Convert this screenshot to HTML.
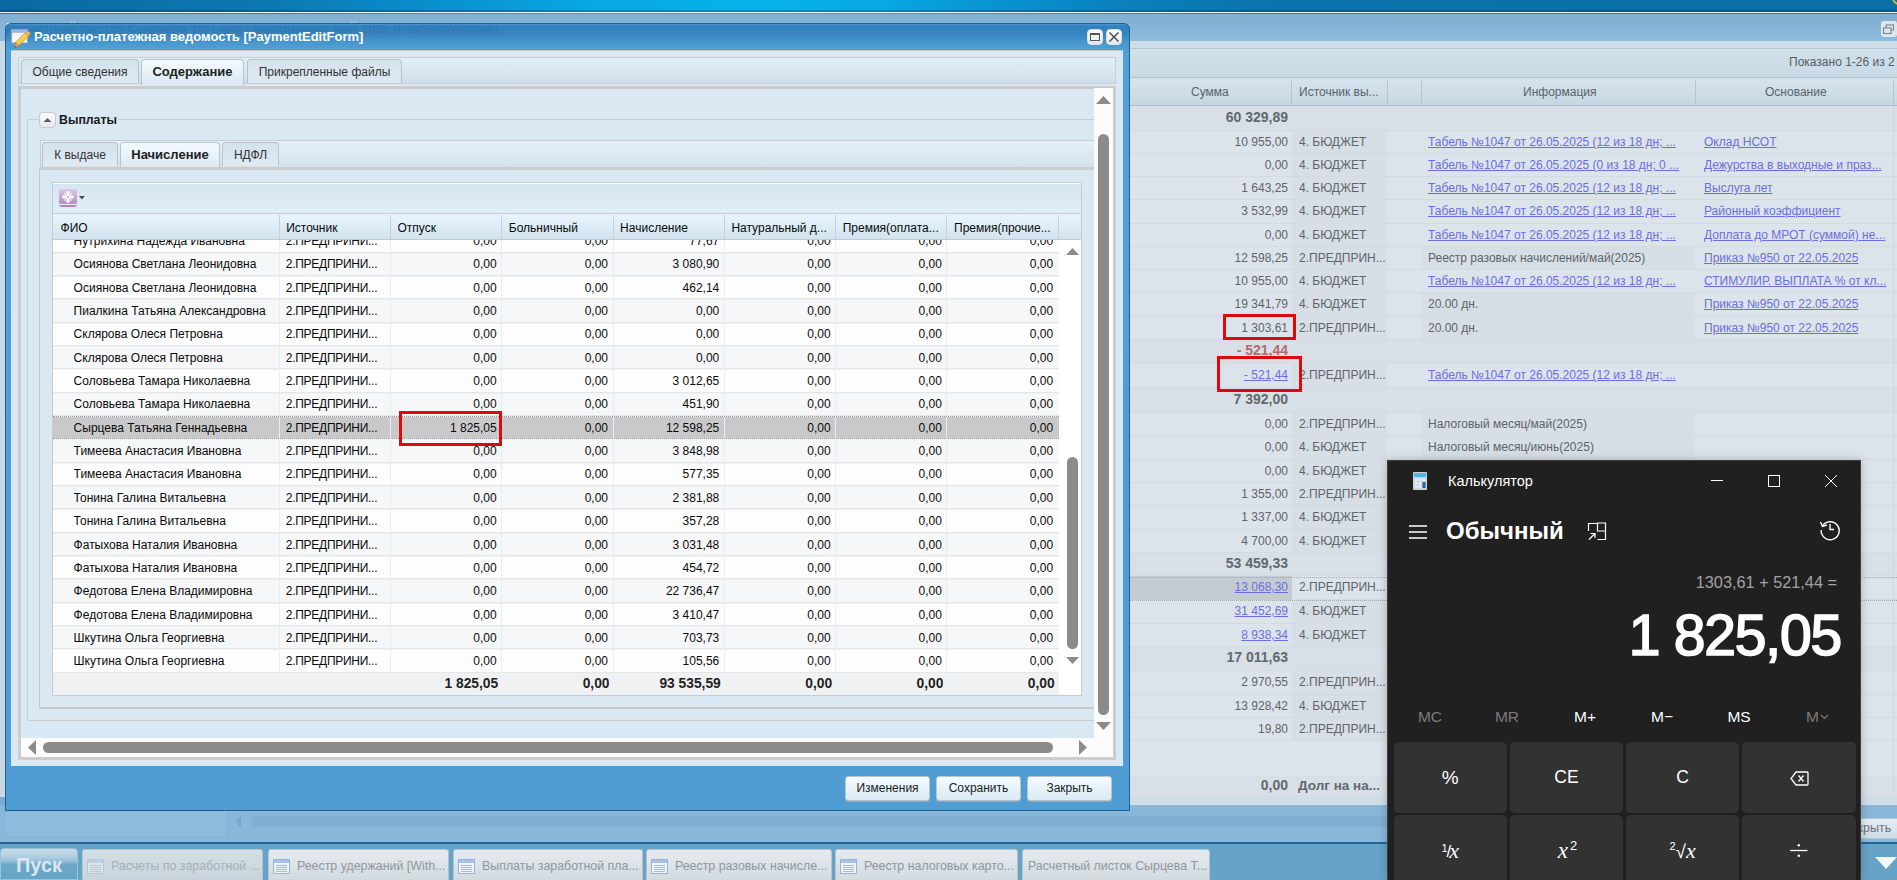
<!DOCTYPE html><html><head><meta charset="utf-8"><style>
*{margin:0;padding:0;box-sizing:border-box}
html,body{width:1897px;height:880px;overflow:hidden;background:#c7d6e2;font-family:"Liberation Sans",sans-serif;font-size:12px;position:relative}
.abs{position:absolute}
.nw{white-space:nowrap;overflow:hidden}
/* top bar */
#topbar{left:0;top:0;width:1897px;height:12px;background:linear-gradient(90deg,#0b68a0 0%,#0c78b0 14%,#0a8ccb 22%,#07a8e2 31%,#06b2ea 40%,#07aae4 46%,#0898d4 51%,#0a80bc 59%,#0a72aa 68%,#0a6fa6 100%)}
#topline{left:0;top:12px;width:1897px;height:1px;background:#e9f6fb}
#topline2{left:0;top:13px;width:1897px;height:1px;background:linear-gradient(90deg,#0b68a0 0%,#0c78b0 14%,#0a8ccb 22%,#07a8e2 31%,#06b2ea 40%,#07aae4 46%,#0898d4 51%,#0a80bc 59%,#0a72aa 68%,#0a6fa6 100%);opacity:.85}
#topdark{left:0;top:10px;width:1897px;height:2px;background:rgba(0,30,80,.28)}
/* background window */
#bgwin{left:0;top:14px;width:1897px;height:828px;background:#c9d8e3}
#bghead{left:0;top:14px;width:1897px;height:27px;background:linear-gradient(#80aed0,#8cbbdc)}
#bgtitle{left:6px;top:20px;font-weight:bold;font-size:13px;color:#fff;white-space:nowrap}
#bgstrip{left:1130px;top:41px;width:767px;height:8px;background:#cfdee8;border-bottom:1px solid #b9c6cf}
#bgtool{left:1130px;top:49px;width:767px;height:29px;background:linear-gradient(#d1e1eb,#c9dae6);border-bottom:1px solid #b5c4ce}
#bghdr{left:1130px;top:78px;width:767px;height:28px;background:linear-gradient(#d6e4ee,#c6d7e3);border-bottom:1px solid #adbdc8}
.bgh{position:absolute;top:78px;height:28px;line-height:28px;color:#5c636a;font-size:12px;white-space:nowrap}
.bgsep{position:absolute;top:80px;width:1px;height:25px;background:#b6c4ce}
.bgrow{position:absolute;left:1130px;width:767px;background:#dde3ea;border-bottom:1px solid #d3dae1}
.bgc{position:absolute;color:#5d646b;white-space:nowrap;overflow:hidden;font-size:12px}
.bgb{font-weight:bold;color:#62686e}
.lnk{color:#6a6fe0;text-decoration:underline}
/* dialog */
#dlg{left:5px;top:23px;width:1125px;height:788px;background:linear-gradient(#4a98d0 0px,#3380bc 2px,#3784c0 10px,#4a9ad0 20px,#519fd4 26px,#4f9dd2 100%);border:1px solid #1d5f96;border-radius:6px 6px 0 0}
#dlgtitle{left:34px;top:29px;font-weight:bold;font-size:13px;color:#fff;white-space:nowrap}
#ghost{left:6px;top:25px;height:9px;overflow:hidden;font-weight:bold;font-size:13px;color:#2b6aa3;white-space:nowrap;opacity:.3}
#body{left:11px;top:50px;width:1112px;height:716px;background:#dae8f3;border-top:1px solid #c8c8c8}
.tbtn{position:absolute;width:16px;height:16px;background:linear-gradient(#fafcfd,#e3e9ee);border:1px solid #d9e2e8;border-radius:4px}
/* tabs */
.tab{position:absolute;height:25px;border:1px solid #b9c3ca;border-bottom:none;border-radius:4px 4px 0 0;background:linear-gradient(#d4e2ec,#dfeaf3);color:#333;font-size:12px;text-align:center;line-height:24px;white-space:nowrap}
.tab.act{background:linear-gradient(#f2fafe,#dce9f4);font-weight:bold;color:#222;height:27px;font-size:13px}
/* grid */
.gc{position:absolute;white-space:nowrap;overflow:hidden;color:#0a0a0a;font-size:12px}
.gr{text-align:right}
.calc{font-family:"Liberation Sans",sans-serif}
</style></head><body><div id="topbar" class="abs"></div><div id="topdark" class="abs"></div><div id="topline" class="abs"></div><div id="topline2" class="abs"></div><div id="bgwin" class="abs"></div><div id="bghead" class="abs"></div><div id="bgtitle" class="abs">Расчетный листок Сырцева Татьяна Геннадьевна май 2025 [PaySlipWindow]</div><div id="bgstrip" class="abs"></div><div id="bgtool" class="abs"></div><div class="abs" style="left:1881px;top:21px;width:16px;height:16px;background:#dfe7ed;border-radius:3px"></div><svg class="abs" style="left:1881px;top:21px" width="16" height="16"><rect x="5" y="4" width="7.5" height="5" fill="none" stroke="#7d8a94" stroke-width="1.2"/><rect x="2.5" y="7" width="7.5" height="5.5" fill="#dfe7ed" stroke="#7d8a94" stroke-width="1.2"/></svg><svg class="abs" style="left:1880px;top:0" width="17" height="12"><circle cx="22" cy="-5" r="10" fill="none" stroke="#e3bd23" stroke-width="1.8"/></svg><div class="abs nw" style="left:1789px;top:55px;color:#555d64;font-size:12px">Показано 1-26 из 2</div><div id="bghdr" class="abs"></div><div class="bgsep" style="left:1291px"></div><div class="bgsep" style="left:1387px"></div><div class="bgsep" style="left:1421px"></div><div class="bgsep" style="left:1695px"></div><div class="bgsep" style="left:1893px"></div><div class="bgh" style="left:1191px">Сумма</div><div class="bgh" style="left:1299px">Источник вы...</div><div class="bgh" style="left:1523px">Информация</div><div class="bgh" style="left:1765px">Основание</div><div class="bgrow" style="top:106px;height:25px;background:#d9dfe6"></div><div class="bgc bgb" style="left:1130px;width:158px;top:106px;height:24px;line-height:22px;text-align:right;font-size:14px">60 329,89</div><div class="bgrow" style="top:131px;height:23px;background:#dde3ea"></div><div class="abs" style="left:1292px;top:131px;width:95px;height:22px;background:#d8dee5"></div><div class="bgc" style="left:1130px;width:158px;top:131px;height:22px;line-height:22px;text-align:right">10 955,00</div><div class="bgc" style="left:1299px;width:86px;top:131px;height:22px;line-height:22px">4. БЮДЖЕТ</div><div class="bgc" style="left:1428px;width:262px;top:131px;height:22px;line-height:22px"><span class="lnk">Табель №1047 от 26.05.2025 (12 из 18 дн; ...</span></div><div class="bgc" style="left:1704px;width:186px;top:131px;height:22px;line-height:22px"><span class="lnk">Оклад НСОТ</span></div><div class="bgrow" style="top:154px;height:23px;background:#dde3ea"></div><div class="abs" style="left:1292px;top:154px;width:95px;height:22px;background:#d8dee5"></div><div class="bgc" style="left:1130px;width:158px;top:154px;height:22px;line-height:22px;text-align:right">0,00</div><div class="bgc" style="left:1299px;width:86px;top:154px;height:22px;line-height:22px">4. БЮДЖЕТ</div><div class="bgc" style="left:1428px;width:262px;top:154px;height:22px;line-height:22px"><span class="lnk">Табель №1047 от 26.05.2025 (0 из 18 дн; 0 ...</span></div><div class="bgc" style="left:1704px;width:186px;top:154px;height:22px;line-height:22px"><span class="lnk">Дежурства в выходные и праз...</span></div><div class="bgrow" style="top:177px;height:23px;background:#dde3ea"></div><div class="abs" style="left:1292px;top:177px;width:95px;height:22px;background:#d8dee5"></div><div class="bgc" style="left:1130px;width:158px;top:177px;height:22px;line-height:22px;text-align:right">1 643,25</div><div class="bgc" style="left:1299px;width:86px;top:177px;height:22px;line-height:22px">4. БЮДЖЕТ</div><div class="bgc" style="left:1428px;width:262px;top:177px;height:22px;line-height:22px"><span class="lnk">Табель №1047 от 26.05.2025 (12 из 18 дн; ...</span></div><div class="bgc" style="left:1704px;width:186px;top:177px;height:22px;line-height:22px"><span class="lnk">Выслуга лет</span></div><div class="bgrow" style="top:200px;height:24px;background:#dde3ea"></div><div class="abs" style="left:1292px;top:200px;width:95px;height:23px;background:#d8dee5"></div><div class="bgc" style="left:1130px;width:158px;top:200px;height:23px;line-height:23px;text-align:right">3 532,99</div><div class="bgc" style="left:1299px;width:86px;top:200px;height:23px;line-height:23px">4. БЮДЖЕТ</div><div class="bgc" style="left:1428px;width:262px;top:200px;height:23px;line-height:23px"><span class="lnk">Табель №1047 от 26.05.2025 (12 из 18 дн; ...</span></div><div class="bgc" style="left:1704px;width:186px;top:200px;height:23px;line-height:23px"><span class="lnk">Районный коэффициент</span></div><div class="bgrow" style="top:224px;height:23px;background:#dde3ea"></div><div class="abs" style="left:1292px;top:224px;width:95px;height:22px;background:#d8dee5"></div><div class="bgc" style="left:1130px;width:158px;top:224px;height:22px;line-height:22px;text-align:right">0,00</div><div class="bgc" style="left:1299px;width:86px;top:224px;height:22px;line-height:22px">4. БЮДЖЕТ</div><div class="bgc" style="left:1428px;width:262px;top:224px;height:22px;line-height:22px"><span class="lnk">Табель №1047 от 26.05.2025 (12 из 18 дн; ...</span></div><div class="bgc" style="left:1704px;width:186px;top:224px;height:22px;line-height:22px"><span class="lnk">Доплата до МРОТ (суммой) не...</span></div><div class="bgrow" style="top:247px;height:23px;background:#dde3ea"></div><div class="abs" style="left:1292px;top:247px;width:95px;height:22px;background:#d8dee5"></div><div class="abs" style="left:1421px;top:247px;width:274px;height:22px;background:#d8dee5"></div><div class="bgc" style="left:1130px;width:158px;top:247px;height:22px;line-height:22px;text-align:right">12 598,25</div><div class="bgc" style="left:1299px;width:86px;top:247px;height:22px;line-height:22px">2.ПРЕДПРИН...</div><div class="bgc" style="left:1428px;width:262px;top:247px;height:22px;line-height:22px">Реестр разовых начислений/май(2025)</div><div class="bgc" style="left:1704px;width:186px;top:247px;height:22px;line-height:22px"><span class="lnk">Приказ №950 от 22.05.2025</span></div><div class="bgrow" style="top:270px;height:23px;background:#dde3ea"></div><div class="abs" style="left:1292px;top:270px;width:95px;height:22px;background:#d8dee5"></div><div class="bgc" style="left:1130px;width:158px;top:270px;height:22px;line-height:22px;text-align:right">10 955,00</div><div class="bgc" style="left:1299px;width:86px;top:270px;height:22px;line-height:22px">4. БЮДЖЕТ</div><div class="bgc" style="left:1428px;width:262px;top:270px;height:22px;line-height:22px"><span class="lnk">Табель №1047 от 26.05.2025 (12 из 18 дн; ...</span></div><div class="bgc" style="left:1704px;width:186px;top:270px;height:22px;line-height:22px"><span class="lnk">СТИМУЛИР. ВЫПЛАТА % от кл...</span></div><div class="bgrow" style="top:293px;height:24px;background:#dde3ea"></div><div class="abs" style="left:1292px;top:293px;width:95px;height:23px;background:#d8dee5"></div><div class="abs" style="left:1421px;top:293px;width:274px;height:23px;background:#d8dee5"></div><div class="bgc" style="left:1130px;width:158px;top:293px;height:23px;line-height:23px;text-align:right">19 341,79</div><div class="bgc" style="left:1299px;width:86px;top:293px;height:23px;line-height:23px">4. БЮДЖЕТ</div><div class="bgc" style="left:1428px;width:262px;top:293px;height:23px;line-height:23px">20.00 дн.</div><div class="bgc" style="left:1704px;width:186px;top:293px;height:23px;line-height:23px"><span class="lnk">Приказ №950 от 22.05.2025</span></div><div class="bgrow" style="top:317px;height:23px;background:#dde3ea"></div><div class="abs" style="left:1292px;top:317px;width:95px;height:22px;background:#d8dee5"></div><div class="abs" style="left:1421px;top:317px;width:274px;height:22px;background:#d8dee5"></div><div class="bgc" style="left:1130px;width:158px;top:317px;height:22px;line-height:22px;text-align:right">1 303,61</div><div class="bgc" style="left:1299px;width:86px;top:317px;height:22px;line-height:22px">2.ПРЕДПРИН...</div><div class="bgc" style="left:1428px;width:262px;top:317px;height:22px;line-height:22px">20.00 дн.</div><div class="bgc" style="left:1704px;width:186px;top:317px;height:22px;line-height:22px"><span class="lnk">Приказ №950 от 22.05.2025</span></div><div class="bgrow" style="top:340px;height:24px;background:#d9dfe6"></div><div class="bgc bgb" style="left:1130px;width:158px;top:340px;height:23px;line-height:21px;text-align:right;color:#b46a70;font-size:14px">- 521,44</div><div class="bgrow" style="top:364px;height:24px;background:#dde3ea"></div><div class="abs" style="left:1292px;top:364px;width:95px;height:23px;background:#d8dee5"></div><div class="bgc" style="left:1130px;width:158px;top:364px;height:23px;line-height:23px;text-align:right"><span class="lnk">- 521,44</span></div><div class="bgc" style="left:1299px;width:86px;top:364px;height:23px;line-height:23px">2.ПРЕДПРИН...</div><div class="bgc" style="left:1428px;width:262px;top:364px;height:23px;line-height:23px"><span class="lnk">Табель №1047 от 26.05.2025 (12 из 18 дн; ...</span></div><div class="bgrow" style="top:388px;height:25px;background:#d9dfe6"></div><div class="bgc bgb" style="left:1130px;width:158px;top:388px;height:24px;line-height:22px;text-align:right;font-size:14px">7 392,00</div><div class="bgrow" style="top:413px;height:23px;background:#dde3ea"></div><div class="abs" style="left:1292px;top:413px;width:95px;height:22px;background:#d8dee5"></div><div class="abs" style="left:1421px;top:413px;width:274px;height:22px;background:#d8dee5"></div><div class="bgc" style="left:1130px;width:158px;top:413px;height:22px;line-height:22px;text-align:right">0,00</div><div class="bgc" style="left:1299px;width:86px;top:413px;height:22px;line-height:22px">2.ПРЕДПРИН...</div><div class="bgc" style="left:1428px;width:262px;top:413px;height:22px;line-height:22px">Налоговый месяц/май(2025)</div><div class="bgrow" style="top:436px;height:24px;background:#dde3ea"></div><div class="abs" style="left:1292px;top:436px;width:95px;height:23px;background:#d8dee5"></div><div class="abs" style="left:1421px;top:436px;width:274px;height:23px;background:#d8dee5"></div><div class="bgc" style="left:1130px;width:158px;top:436px;height:23px;line-height:23px;text-align:right">0,00</div><div class="bgc" style="left:1299px;width:86px;top:436px;height:23px;line-height:23px">4. БЮДЖЕТ</div><div class="bgc" style="left:1428px;width:262px;top:436px;height:23px;line-height:23px">Налоговый месяц/июнь(2025)</div><div class="bgrow" style="top:460px;height:23px;background:#dde3ea"></div><div class="abs" style="left:1292px;top:460px;width:95px;height:22px;background:#d8dee5"></div><div class="bgc" style="left:1130px;width:158px;top:460px;height:22px;line-height:22px;text-align:right">0,00</div><div class="bgc" style="left:1299px;width:86px;top:460px;height:22px;line-height:22px">4. БЮДЖЕТ</div><div class="bgrow" style="top:483px;height:23px;background:#dde3ea"></div><div class="abs" style="left:1292px;top:483px;width:95px;height:22px;background:#d8dee5"></div><div class="bgc" style="left:1130px;width:158px;top:483px;height:22px;line-height:22px;text-align:right">1 355,00</div><div class="bgc" style="left:1299px;width:86px;top:483px;height:22px;line-height:22px">2.ПРЕДПРИН...</div><div class="bgrow" style="top:506px;height:24px;background:#dde3ea"></div><div class="abs" style="left:1292px;top:506px;width:95px;height:23px;background:#d8dee5"></div><div class="bgc" style="left:1130px;width:158px;top:506px;height:23px;line-height:23px;text-align:right">1 337,00</div><div class="bgc" style="left:1299px;width:86px;top:506px;height:23px;line-height:23px">4. БЮДЖЕТ</div><div class="bgrow" style="top:530px;height:23px;background:#dde3ea"></div><div class="abs" style="left:1292px;top:530px;width:95px;height:22px;background:#d8dee5"></div><div class="bgc" style="left:1130px;width:158px;top:530px;height:22px;line-height:22px;text-align:right">4 700,00</div><div class="bgc" style="left:1299px;width:86px;top:530px;height:22px;line-height:22px">4. БЮДЖЕТ</div><div class="bgrow" style="top:553px;height:23px;background:#d9dfe6"></div><div class="bgc bgb" style="left:1130px;width:158px;top:553px;height:22px;line-height:20px;text-align:right;font-size:14px">53 459,33</div><div class="bgrow" style="top:576px;height:24px;background:#dde3ea"></div><div class="abs" style="left:1130px;top:576px;width:162px;height:24px;background:#c5cbd2"></div><div class="bgc" style="left:1130px;width:158px;top:576px;height:23px;line-height:23px;text-align:right"><span class="lnk">13 068,30</span></div><div class="bgc" style="left:1299px;width:86px;top:576px;height:23px;line-height:23px">2.ПРЕДПРИН...</div><div class="bgrow" style="top:600px;height:24px;background:#dde3ea"></div><div class="abs" style="left:1292px;top:600px;width:95px;height:23px;background:#d8dee5"></div><div class="bgc" style="left:1130px;width:158px;top:600px;height:23px;line-height:23px;text-align:right"><span class="lnk">31 452,69</span></div><div class="bgc" style="left:1299px;width:86px;top:600px;height:23px;line-height:23px">4. БЮДЖЕТ</div><div class="bgrow" style="top:624px;height:23px;background:#dde3ea"></div><div class="abs" style="left:1292px;top:624px;width:95px;height:22px;background:#d8dee5"></div><div class="bgc" style="left:1130px;width:158px;top:624px;height:22px;line-height:22px;text-align:right"><span class="lnk">8 938,34</span></div><div class="bgc" style="left:1299px;width:86px;top:624px;height:22px;line-height:22px">4. БЮДЖЕТ</div><div class="bgrow" style="top:647px;height:24px;background:#d9dfe6"></div><div class="bgc bgb" style="left:1130px;width:158px;top:647px;height:23px;line-height:21px;text-align:right;font-size:14px">17 011,63</div><div class="bgrow" style="top:671px;height:24px;background:#dde3ea"></div><div class="abs" style="left:1292px;top:671px;width:95px;height:23px;background:#d8dee5"></div><div class="bgc" style="left:1130px;width:158px;top:671px;height:23px;line-height:23px;text-align:right">2 970,55</div><div class="bgc" style="left:1299px;width:86px;top:671px;height:23px;line-height:23px">2.ПРЕДПРИН...</div><div class="bgrow" style="top:695px;height:23px;background:#dde3ea"></div><div class="abs" style="left:1292px;top:695px;width:95px;height:22px;background:#d8dee5"></div><div class="bgc" style="left:1130px;width:158px;top:695px;height:22px;line-height:22px;text-align:right">13 928,42</div><div class="bgc" style="left:1299px;width:86px;top:695px;height:22px;line-height:22px">4. БЮДЖЕТ</div><div class="bgrow" style="top:718px;height:23px;background:#dde3ea"></div><div class="abs" style="left:1292px;top:718px;width:95px;height:22px;background:#d8dee5"></div><div class="bgc" style="left:1130px;width:158px;top:718px;height:22px;line-height:22px;text-align:right">19,80</div><div class="bgc" style="left:1299px;width:86px;top:718px;height:22px;line-height:22px">2.ПРЕДПРИН...</div><div class="abs" style="left:1130px;top:577px;width:767px;height:24px;border-top:1px dotted #a2aab2;border-bottom:1px dotted #a2aab2"></div><div class="bgrow" style="top:741px;height:34px;background:#dee4eb;border:none"></div><div class="bgrow" style="top:775px;height:22px;background:#d9dfe6"></div><div class="bgc bgb" style="left:1130px;width:158px;top:775px;height:21px;line-height:21px;text-align:right;font-size:14px">0,00</div><div class="bgc bgb" style="left:1298px;width:90px;top:775px;height:21px;line-height:21px;font-size:13.5px">Долг на на...</div><div class="abs" style="left:0;top:797px;width:1897px;height:8px;background:#cfdee8"></div><div class="abs" style="left:0;top:797px;width:6px;height:45px;background:#78acd0"></div><div class="abs" style="left:0;top:805px;width:1897px;height:37px;background:#88b7d9"></div><div class="abs" style="left:6px;top:812px;width:222px;height:25px;background:#8ebcdc;border-right:1px solid #80b0d2;border-bottom:1px solid #84b3d4"></div><svg class="abs" style="left:234px;top:815px" width="8" height="13"><path d="M7 0 L1 6.5 L7 13 Z" fill="#78a9cc"/></svg><div class="abs" style="left:251px;top:816px;width:1606px;height:11px;background:#80b0d1;border-radius:6px"></div><div class="abs nw" style="left:1832px;top:818px;width:80px;height:21px;background:linear-gradient(#e3edf3,#cfdde7);border:1px solid #b6c6d2;border-radius:3px;color:#6f7479;font-size:12.5px;line-height:19px;padding-left:10px">Закрыть</div><div class="abs" style="left:1893px;top:106px;width:1px;height:691px;background:#d0d7de"></div><div class="abs" style="left:1223px;top:314px;width:73px;height:26px;border:3px solid #db0b0b"></div><div class="abs" style="left:1217px;top:356px;width:85px;height:36px;border:3px solid #db0b0b"></div><div id="dlg" class="abs"></div><div id="ghost" class="abs"><div style="margin-top:-4px">Расчетный листок Сырцева Татьяна Геннадьевна май 2025 [PaySlipWindow]</div></div><svg class="abs" style="left:11px;top:29px" width="20" height="20" viewBox="0 0 20 20">
<rect x="0.5" y="0.5" width="16" height="13.5" fill="#f3f5fb" stroke="#86a3d6"/>
<rect x="1" y="1" width="15" height="2.8" fill="#9db7e7"/>
<path d="M4.4 13.3 L14.4 3.8 L17.6 7.2 L7.6 16.7 Z" fill="#f4d34a" stroke="#c98d22" stroke-width="0.7"/>
<path d="M14.4 3.8 L15.8 2.5 Q17 1.6 18.2 2.8 L19 3.7 Q19.8 4.9 18.8 5.9 L17.6 7.2 Z" fill="#f2b477" stroke="#c98d22" stroke-width="0.7"/>
<path d="M4.4 13.3 L7.6 16.7 L3.6 18.6 Z" fill="#e7b57c" stroke="#a86a2a" stroke-width="0.6"/>
<path d="M3.6 18.6 L4.3 17 L5.2 17.9 Z" fill="#6b3a12"/>
</svg><div id="dlgtitle" class="abs">Расчетно-платежная ведомость [PaymentEditForm]</div><div class="tbtn abs" style="left:1087px;top:29px"></div><div class="abs" style="left:1090px;top:33px;width:10px;height:8px;border:1.5px solid #555;border-top-width:2.5px"></div><div class="tbtn abs" style="left:1106px;top:29px"></div><svg class="abs" style="left:1106px;top:29px" width="16" height="16" viewBox="0 0 16 16"><path d="M3.5 3.5 L12.5 12.5 M12.5 3.5 L3.5 12.5" stroke="#444" stroke-width="1.4"/></svg><div id="body" class="abs"></div><div class="abs" style="left:18px;top:57px;width:1098px;height:27px;border:1px solid #cbcfd2;background:linear-gradient(#e1eff8,#cfdfe9)"></div><div class="tab" style="left:21px;top:59px;width:118px;height:24px;line-height:24px">Общие сведения</div><div class="tab act" style="left:141px;top:59px;width:103px;height:26px;line-height:23px">Содержание</div><div class="tab" style="left:247px;top:59px;width:155px;height:24px;line-height:24px">Прикрепленные файлы</div><div class="abs" style="left:18px;top:86px;width:1098px;height:674px;border:3px solid #cdcdcd;background:#dae8f3"></div><div class="abs" style="left:27px;top:119px;width:1067px;height:602px;border:1px solid #c7cfd5;border-right:none"></div><div class="abs" style="left:38px;top:108px;width:80px;height:22px;background:#dae8f3"></div><div class="abs" style="left:39px;top:112px;width:17px;height:16px;border:1px solid #c4c9cd;border-radius:4px;background:linear-gradient(#fdfdfd,#e4e8eb)"></div><svg class="abs" style="left:39px;top:112px" width="17" height="16"><path d="M4.5 10 L8.5 6 L12.5 10 Z" fill="#5a5e62"/></svg><div class="abs nw" style="left:59px;top:113px;font-weight:bold;font-size:12.3px;color:#1a1a1a;line-height:15px">Выплаты</div><div class="abs" style="left:40px;top:140px;width:1054px;height:28px;border:1px solid #c4ced6;border-bottom:none;border-right:none;background:linear-gradient(#e4f0f8,#d2e1ec)"></div><div class="tab" style="left:42px;top:142px;width:76px;height:24px;line-height:24px">К выдаче</div><div class="tab act" style="left:120px;top:142px;width:100px;height:26px;line-height:23px">Начисление</div><div class="tab" style="left:222px;top:142px;width:57px;height:24px;line-height:24px">НДФЛ</div><div class="abs" style="left:39px;top:167px;width:1055px;height:542px;border:1.5px solid #c8c8c8;border-bottom-width:2px;border-top:3px solid #cdcdcd;border-right:none;background:#dae8f3"></div><div class="abs" style="left:52px;top:182px;width:1030px;height:514px;border:1px solid #c6cdd2;background:#fff"></div><div class="abs" style="left:53px;top:183px;width:1028px;height:31px;background:linear-gradient(#d5e5f0,#e0eef8);border-top:1px solid #f2fcff;border-bottom:1px solid #c8cfd4"></div><svg class="abs" style="left:59px;top:189px" width="28" height="19" viewBox="0 0 28 19">
<defs><linearGradient id="pg" x1="0" y1="0" x2="0" y2="1"><stop offset="0" stop-color="#dec8e8"/><stop offset="1" stop-color="#b08cc4"/></linearGradient></defs>
<rect x="0" y="0.5" width="18" height="17.5" rx="3" fill="#a888bc"/>
<rect x="0.5" y="14" width="17" height="2" fill="#f2eef6"/>
<rect x="0" y="0" width="18" height="15" rx="3" fill="url(#pg)"/>
<g fill="#fff"><circle cx="9" cy="3.8" r="1.7"/><circle cx="9" cy="12.2" r="1.7"/><circle cx="4.8" cy="8" r="1.7"/><circle cx="13.2" cy="8" r="1.7"/><circle cx="9" cy="8" r="2.8"/></g>
<g fill="#fff" opacity=".65"><circle cx="6" cy="5" r="1.1"/><circle cx="12" cy="5" r="1.1"/><circle cx="6" cy="11" r="1.1"/><circle cx="12" cy="11" r="1.1"/></g>
<circle cx="9" cy="8" r="1" fill="#b898c8"/>
<path d="M20 7 L25.8 7 L22.9 10.5 Z" fill="#4a4a4a"/>
</svg><div class="abs" style="left:53px;top:214px;width:1028px;height:26px;background:linear-gradient(#e9f5fd,#d2e3ef);border-bottom:1px solid #c2ced6"></div><div class="abs" style="left:278.6px;top:215px;width:1px;height:24px;background:#c5d1d9"></div><div class="abs" style="left:389.9px;top:215px;width:1px;height:24px;background:#c5d1d9"></div><div class="abs" style="left:501.2px;top:215px;width:1px;height:24px;background:#c5d1d9"></div><div class="abs" style="left:612.5px;top:215px;width:1px;height:24px;background:#c5d1d9"></div><div class="abs" style="left:723.8px;top:215px;width:1px;height:24px;background:#c5d1d9"></div><div class="abs" style="left:835.1px;top:215px;width:1px;height:24px;background:#c5d1d9"></div><div class="abs" style="left:946.4px;top:215px;width:1px;height:24px;background:#c5d1d9"></div><div class="abs" style="left:1057.7px;top:215px;width:1px;height:24px;background:#c5d1d9"></div><div class="gc" style="left:60.6px;top:215.6px;width:215.6px;height:25px;line-height:25px">ФИО</div><div class="gc" style="left:286.2px;top:215.6px;width:101.3px;height:25px;line-height:25px">Источник</div><div class="gc" style="left:397.5px;top:215.6px;width:101.3px;height:25px;line-height:25px">Отпуск</div><div class="gc" style="left:508.8px;top:215.6px;width:101.3px;height:25px;line-height:25px">Больничный</div><div class="gc" style="left:620.1px;top:215.6px;width:101.3px;height:25px;line-height:25px">Начисление</div><div class="gc" style="left:731.4px;top:215.6px;width:101.3px;height:25px;line-height:25px">Натуральный д...</div><div class="gc" style="left:842.7px;top:215.6px;width:101.3px;height:25px;line-height:25px">Премия(оплата...</div><div class="gc" style="left:954.0px;top:215.6px;width:101.3px;height:25px;line-height:25px">Премия(прочие...</div><div class="abs" style="left:53px;top:240px;width:1006px;height:432.5px;overflow:hidden"><div class="abs" style="left:0;top:-10.85px;width:1006px;height:23.35px;background:#fdfdfe;border-bottom:1px solid #e6e6e6;border-top:1px solid #f1f1f1"></div><div class="gc" style="left:20.6px;top:-10.05px;width:200px;height:22.35px;line-height:22.35px">Нутрихина Надежда Ивановна</div><div class="gc" style="left:232.8px;top:-10.05px;width:100px;height:22.35px;line-height:22.35px;letter-spacing:-0.28px">2.ПРЕДПРИНИ...</div><div class="gc gr" style="left:336.9px;top:-10.05px;width:106.8px;height:22.35px;line-height:22.35px">0,00</div><div class="gc gr" style="left:448.2px;top:-10.05px;width:106.8px;height:22.35px;line-height:22.35px">0,00</div><div class="gc gr" style="left:559.5px;top:-10.05px;width:106.8px;height:22.35px;line-height:22.35px">77,67</div><div class="gc gr" style="left:670.8px;top:-10.05px;width:106.8px;height:22.35px;line-height:22.35px">0,00</div><div class="gc gr" style="left:782.1px;top:-10.05px;width:106.8px;height:22.35px;line-height:22.35px">0,00</div><div class="gc gr" style="left:893.4px;top:-10.05px;width:106.8px;height:22.35px;line-height:22.35px">0,00</div><div class="abs" style="left:0;top:12.50px;width:1006px;height:23.35px;background:#f6f7f9;border-bottom:1px solid #e6e6e6;border-top:1px solid #f1f1f1"></div><div class="gc" style="left:20.6px;top:13.30px;width:200px;height:22.35px;line-height:22.35px">Осиянова Светлана Леонидовна</div><div class="gc" style="left:232.8px;top:13.30px;width:100px;height:22.35px;line-height:22.35px;letter-spacing:-0.28px">2.ПРЕДПРИНИ...</div><div class="gc gr" style="left:336.9px;top:13.30px;width:106.8px;height:22.35px;line-height:22.35px">0,00</div><div class="gc gr" style="left:448.2px;top:13.30px;width:106.8px;height:22.35px;line-height:22.35px">0,00</div><div class="gc gr" style="left:559.5px;top:13.30px;width:106.8px;height:22.35px;line-height:22.35px">3 080,90</div><div class="gc gr" style="left:670.8px;top:13.30px;width:106.8px;height:22.35px;line-height:22.35px">0,00</div><div class="gc gr" style="left:782.1px;top:13.30px;width:106.8px;height:22.35px;line-height:22.35px">0,00</div><div class="gc gr" style="left:893.4px;top:13.30px;width:106.8px;height:22.35px;line-height:22.35px">0,00</div><div class="abs" style="left:0;top:35.85px;width:1006px;height:23.35px;background:#fdfdfe;border-bottom:1px solid #e6e6e6;border-top:1px solid #f1f1f1"></div><div class="gc" style="left:20.6px;top:36.65px;width:200px;height:22.35px;line-height:22.35px">Осиянова Светлана Леонидовна</div><div class="gc" style="left:232.8px;top:36.65px;width:100px;height:22.35px;line-height:22.35px;letter-spacing:-0.28px">2.ПРЕДПРИНИ...</div><div class="gc gr" style="left:336.9px;top:36.65px;width:106.8px;height:22.35px;line-height:22.35px">0,00</div><div class="gc gr" style="left:448.2px;top:36.65px;width:106.8px;height:22.35px;line-height:22.35px">0,00</div><div class="gc gr" style="left:559.5px;top:36.65px;width:106.8px;height:22.35px;line-height:22.35px">462,14</div><div class="gc gr" style="left:670.8px;top:36.65px;width:106.8px;height:22.35px;line-height:22.35px">0,00</div><div class="gc gr" style="left:782.1px;top:36.65px;width:106.8px;height:22.35px;line-height:22.35px">0,00</div><div class="gc gr" style="left:893.4px;top:36.65px;width:106.8px;height:22.35px;line-height:22.35px">0,00</div><div class="abs" style="left:0;top:59.20px;width:1006px;height:23.35px;background:#f6f7f9;border-bottom:1px solid #e6e6e6;border-top:1px solid #f1f1f1"></div><div class="gc" style="left:20.6px;top:60.00px;width:200px;height:22.35px;line-height:22.35px">Пиалкина Татьяна Александровна</div><div class="gc" style="left:232.8px;top:60.00px;width:100px;height:22.35px;line-height:22.35px;letter-spacing:-0.28px">2.ПРЕДПРИНИ...</div><div class="gc gr" style="left:336.9px;top:60.00px;width:106.8px;height:22.35px;line-height:22.35px">0,00</div><div class="gc gr" style="left:448.2px;top:60.00px;width:106.8px;height:22.35px;line-height:22.35px">0,00</div><div class="gc gr" style="left:559.5px;top:60.00px;width:106.8px;height:22.35px;line-height:22.35px">0,00</div><div class="gc gr" style="left:670.8px;top:60.00px;width:106.8px;height:22.35px;line-height:22.35px">0,00</div><div class="gc gr" style="left:782.1px;top:60.00px;width:106.8px;height:22.35px;line-height:22.35px">0,00</div><div class="gc gr" style="left:893.4px;top:60.00px;width:106.8px;height:22.35px;line-height:22.35px">0,00</div><div class="abs" style="left:0;top:82.55px;width:1006px;height:23.35px;background:#fdfdfe;border-bottom:1px solid #e6e6e6;border-top:1px solid #f1f1f1"></div><div class="gc" style="left:20.6px;top:83.35px;width:200px;height:22.35px;line-height:22.35px">Склярова Олеся Петровна</div><div class="gc" style="left:232.8px;top:83.35px;width:100px;height:22.35px;line-height:22.35px;letter-spacing:-0.28px">2.ПРЕДПРИНИ...</div><div class="gc gr" style="left:336.9px;top:83.35px;width:106.8px;height:22.35px;line-height:22.35px">0,00</div><div class="gc gr" style="left:448.2px;top:83.35px;width:106.8px;height:22.35px;line-height:22.35px">0,00</div><div class="gc gr" style="left:559.5px;top:83.35px;width:106.8px;height:22.35px;line-height:22.35px">0,00</div><div class="gc gr" style="left:670.8px;top:83.35px;width:106.8px;height:22.35px;line-height:22.35px">0,00</div><div class="gc gr" style="left:782.1px;top:83.35px;width:106.8px;height:22.35px;line-height:22.35px">0,00</div><div class="gc gr" style="left:893.4px;top:83.35px;width:106.8px;height:22.35px;line-height:22.35px">0,00</div><div class="abs" style="left:0;top:105.90px;width:1006px;height:23.35px;background:#f6f7f9;border-bottom:1px solid #e6e6e6;border-top:1px solid #f1f1f1"></div><div class="gc" style="left:20.6px;top:106.70px;width:200px;height:22.35px;line-height:22.35px">Склярова Олеся Петровна</div><div class="gc" style="left:232.8px;top:106.70px;width:100px;height:22.35px;line-height:22.35px;letter-spacing:-0.28px">2.ПРЕДПРИНИ...</div><div class="gc gr" style="left:336.9px;top:106.70px;width:106.8px;height:22.35px;line-height:22.35px">0,00</div><div class="gc gr" style="left:448.2px;top:106.70px;width:106.8px;height:22.35px;line-height:22.35px">0,00</div><div class="gc gr" style="left:559.5px;top:106.70px;width:106.8px;height:22.35px;line-height:22.35px">0,00</div><div class="gc gr" style="left:670.8px;top:106.70px;width:106.8px;height:22.35px;line-height:22.35px">0,00</div><div class="gc gr" style="left:782.1px;top:106.70px;width:106.8px;height:22.35px;line-height:22.35px">0,00</div><div class="gc gr" style="left:893.4px;top:106.70px;width:106.8px;height:22.35px;line-height:22.35px">0,00</div><div class="abs" style="left:0;top:129.25px;width:1006px;height:23.35px;background:#fdfdfe;border-bottom:1px solid #e6e6e6;border-top:1px solid #f1f1f1"></div><div class="gc" style="left:20.6px;top:130.05px;width:200px;height:22.35px;line-height:22.35px">Соловьева Тамара Николаевна</div><div class="gc" style="left:232.8px;top:130.05px;width:100px;height:22.35px;line-height:22.35px;letter-spacing:-0.28px">2.ПРЕДПРИНИ...</div><div class="gc gr" style="left:336.9px;top:130.05px;width:106.8px;height:22.35px;line-height:22.35px">0,00</div><div class="gc gr" style="left:448.2px;top:130.05px;width:106.8px;height:22.35px;line-height:22.35px">0,00</div><div class="gc gr" style="left:559.5px;top:130.05px;width:106.8px;height:22.35px;line-height:22.35px">3 012,65</div><div class="gc gr" style="left:670.8px;top:130.05px;width:106.8px;height:22.35px;line-height:22.35px">0,00</div><div class="gc gr" style="left:782.1px;top:130.05px;width:106.8px;height:22.35px;line-height:22.35px">0,00</div><div class="gc gr" style="left:893.4px;top:130.05px;width:106.8px;height:22.35px;line-height:22.35px">0,00</div><div class="abs" style="left:0;top:152.60px;width:1006px;height:23.35px;background:#f6f7f9;border-bottom:1px solid #e6e6e6;border-top:1px solid #f1f1f1"></div><div class="gc" style="left:20.6px;top:153.40px;width:200px;height:22.35px;line-height:22.35px">Соловьева Тамара Николаевна</div><div class="gc" style="left:232.8px;top:153.40px;width:100px;height:22.35px;line-height:22.35px;letter-spacing:-0.28px">2.ПРЕДПРИНИ...</div><div class="gc gr" style="left:336.9px;top:153.40px;width:106.8px;height:22.35px;line-height:22.35px">0,00</div><div class="gc gr" style="left:448.2px;top:153.40px;width:106.8px;height:22.35px;line-height:22.35px">0,00</div><div class="gc gr" style="left:559.5px;top:153.40px;width:106.8px;height:22.35px;line-height:22.35px">451,90</div><div class="gc gr" style="left:670.8px;top:153.40px;width:106.8px;height:22.35px;line-height:22.35px">0,00</div><div class="gc gr" style="left:782.1px;top:153.40px;width:106.8px;height:22.35px;line-height:22.35px">0,00</div><div class="gc gr" style="left:893.4px;top:153.40px;width:106.8px;height:22.35px;line-height:22.35px">0,00</div><div class="abs" style="left:0;top:175.95px;width:1006px;height:23.35px;background:#c9c9cb;border-bottom:1px solid #e6e6e6;border-top:1px solid #f1f1f1"></div><div class="gc" style="left:20.6px;top:176.75px;width:200px;height:22.35px;line-height:22.35px">Сырцева Татьяна Геннадьевна</div><div class="gc" style="left:232.8px;top:176.75px;width:100px;height:22.35px;line-height:22.35px;letter-spacing:-0.28px">2.ПРЕДПРИНИ...</div><div class="gc gr" style="left:336.9px;top:176.75px;width:106.8px;height:22.35px;line-height:22.35px">1 825,05</div><div class="gc gr" style="left:448.2px;top:176.75px;width:106.8px;height:22.35px;line-height:22.35px">0,00</div><div class="gc gr" style="left:559.5px;top:176.75px;width:106.8px;height:22.35px;line-height:22.35px">12 598,25</div><div class="gc gr" style="left:670.8px;top:176.75px;width:106.8px;height:22.35px;line-height:22.35px">0,00</div><div class="gc gr" style="left:782.1px;top:176.75px;width:106.8px;height:22.35px;line-height:22.35px">0,00</div><div class="gc gr" style="left:893.4px;top:176.75px;width:106.8px;height:22.35px;line-height:22.35px">0,00</div><div class="abs" style="left:0;top:199.30px;width:1006px;height:23.35px;background:#f6f7f9;border-bottom:1px solid #e6e6e6;border-top:1px solid #f1f1f1"></div><div class="gc" style="left:20.6px;top:200.10px;width:200px;height:22.35px;line-height:22.35px">Тимеева Анастасия Ивановна</div><div class="gc" style="left:232.8px;top:200.10px;width:100px;height:22.35px;line-height:22.35px;letter-spacing:-0.28px">2.ПРЕДПРИНИ...</div><div class="gc gr" style="left:336.9px;top:200.10px;width:106.8px;height:22.35px;line-height:22.35px">0,00</div><div class="gc gr" style="left:448.2px;top:200.10px;width:106.8px;height:22.35px;line-height:22.35px">0,00</div><div class="gc gr" style="left:559.5px;top:200.10px;width:106.8px;height:22.35px;line-height:22.35px">3 848,98</div><div class="gc gr" style="left:670.8px;top:200.10px;width:106.8px;height:22.35px;line-height:22.35px">0,00</div><div class="gc gr" style="left:782.1px;top:200.10px;width:106.8px;height:22.35px;line-height:22.35px">0,00</div><div class="gc gr" style="left:893.4px;top:200.10px;width:106.8px;height:22.35px;line-height:22.35px">0,00</div><div class="abs" style="left:0;top:222.65px;width:1006px;height:23.35px;background:#fdfdfe;border-bottom:1px solid #e6e6e6;border-top:1px solid #f1f1f1"></div><div class="gc" style="left:20.6px;top:223.45px;width:200px;height:22.35px;line-height:22.35px">Тимеева Анастасия Ивановна</div><div class="gc" style="left:232.8px;top:223.45px;width:100px;height:22.35px;line-height:22.35px;letter-spacing:-0.28px">2.ПРЕДПРИНИ...</div><div class="gc gr" style="left:336.9px;top:223.45px;width:106.8px;height:22.35px;line-height:22.35px">0,00</div><div class="gc gr" style="left:448.2px;top:223.45px;width:106.8px;height:22.35px;line-height:22.35px">0,00</div><div class="gc gr" style="left:559.5px;top:223.45px;width:106.8px;height:22.35px;line-height:22.35px">577,35</div><div class="gc gr" style="left:670.8px;top:223.45px;width:106.8px;height:22.35px;line-height:22.35px">0,00</div><div class="gc gr" style="left:782.1px;top:223.45px;width:106.8px;height:22.35px;line-height:22.35px">0,00</div><div class="gc gr" style="left:893.4px;top:223.45px;width:106.8px;height:22.35px;line-height:22.35px">0,00</div><div class="abs" style="left:0;top:246.00px;width:1006px;height:23.35px;background:#f6f7f9;border-bottom:1px solid #e6e6e6;border-top:1px solid #f1f1f1"></div><div class="gc" style="left:20.6px;top:246.80px;width:200px;height:22.35px;line-height:22.35px">Тонина Галина Витальевна</div><div class="gc" style="left:232.8px;top:246.80px;width:100px;height:22.35px;line-height:22.35px;letter-spacing:-0.28px">2.ПРЕДПРИНИ...</div><div class="gc gr" style="left:336.9px;top:246.80px;width:106.8px;height:22.35px;line-height:22.35px">0,00</div><div class="gc gr" style="left:448.2px;top:246.80px;width:106.8px;height:22.35px;line-height:22.35px">0,00</div><div class="gc gr" style="left:559.5px;top:246.80px;width:106.8px;height:22.35px;line-height:22.35px">2 381,88</div><div class="gc gr" style="left:670.8px;top:246.80px;width:106.8px;height:22.35px;line-height:22.35px">0,00</div><div class="gc gr" style="left:782.1px;top:246.80px;width:106.8px;height:22.35px;line-height:22.35px">0,00</div><div class="gc gr" style="left:893.4px;top:246.80px;width:106.8px;height:22.35px;line-height:22.35px">0,00</div><div class="abs" style="left:0;top:269.35px;width:1006px;height:23.35px;background:#fdfdfe;border-bottom:1px solid #e6e6e6;border-top:1px solid #f1f1f1"></div><div class="gc" style="left:20.6px;top:270.15px;width:200px;height:22.35px;line-height:22.35px">Тонина Галина Витальевна</div><div class="gc" style="left:232.8px;top:270.15px;width:100px;height:22.35px;line-height:22.35px;letter-spacing:-0.28px">2.ПРЕДПРИНИ...</div><div class="gc gr" style="left:336.9px;top:270.15px;width:106.8px;height:22.35px;line-height:22.35px">0,00</div><div class="gc gr" style="left:448.2px;top:270.15px;width:106.8px;height:22.35px;line-height:22.35px">0,00</div><div class="gc gr" style="left:559.5px;top:270.15px;width:106.8px;height:22.35px;line-height:22.35px">357,28</div><div class="gc gr" style="left:670.8px;top:270.15px;width:106.8px;height:22.35px;line-height:22.35px">0,00</div><div class="gc gr" style="left:782.1px;top:270.15px;width:106.8px;height:22.35px;line-height:22.35px">0,00</div><div class="gc gr" style="left:893.4px;top:270.15px;width:106.8px;height:22.35px;line-height:22.35px">0,00</div><div class="abs" style="left:0;top:292.70px;width:1006px;height:23.35px;background:#f6f7f9;border-bottom:1px solid #e6e6e6;border-top:1px solid #f1f1f1"></div><div class="gc" style="left:20.6px;top:293.50px;width:200px;height:22.35px;line-height:22.35px">Фатыхова Наталия Ивановна</div><div class="gc" style="left:232.8px;top:293.50px;width:100px;height:22.35px;line-height:22.35px;letter-spacing:-0.28px">2.ПРЕДПРИНИ...</div><div class="gc gr" style="left:336.9px;top:293.50px;width:106.8px;height:22.35px;line-height:22.35px">0,00</div><div class="gc gr" style="left:448.2px;top:293.50px;width:106.8px;height:22.35px;line-height:22.35px">0,00</div><div class="gc gr" style="left:559.5px;top:293.50px;width:106.8px;height:22.35px;line-height:22.35px">3 031,48</div><div class="gc gr" style="left:670.8px;top:293.50px;width:106.8px;height:22.35px;line-height:22.35px">0,00</div><div class="gc gr" style="left:782.1px;top:293.50px;width:106.8px;height:22.35px;line-height:22.35px">0,00</div><div class="gc gr" style="left:893.4px;top:293.50px;width:106.8px;height:22.35px;line-height:22.35px">0,00</div><div class="abs" style="left:0;top:316.05px;width:1006px;height:23.35px;background:#fdfdfe;border-bottom:1px solid #e6e6e6;border-top:1px solid #f1f1f1"></div><div class="gc" style="left:20.6px;top:316.85px;width:200px;height:22.35px;line-height:22.35px">Фатыхова Наталия Ивановна</div><div class="gc" style="left:232.8px;top:316.85px;width:100px;height:22.35px;line-height:22.35px;letter-spacing:-0.28px">2.ПРЕДПРИНИ...</div><div class="gc gr" style="left:336.9px;top:316.85px;width:106.8px;height:22.35px;line-height:22.35px">0,00</div><div class="gc gr" style="left:448.2px;top:316.85px;width:106.8px;height:22.35px;line-height:22.35px">0,00</div><div class="gc gr" style="left:559.5px;top:316.85px;width:106.8px;height:22.35px;line-height:22.35px">454,72</div><div class="gc gr" style="left:670.8px;top:316.85px;width:106.8px;height:22.35px;line-height:22.35px">0,00</div><div class="gc gr" style="left:782.1px;top:316.85px;width:106.8px;height:22.35px;line-height:22.35px">0,00</div><div class="gc gr" style="left:893.4px;top:316.85px;width:106.8px;height:22.35px;line-height:22.35px">0,00</div><div class="abs" style="left:0;top:339.40px;width:1006px;height:23.35px;background:#f6f7f9;border-bottom:1px solid #e6e6e6;border-top:1px solid #f1f1f1"></div><div class="gc" style="left:20.6px;top:340.20px;width:200px;height:22.35px;line-height:22.35px">Федотова Елена Владимировна</div><div class="gc" style="left:232.8px;top:340.20px;width:100px;height:22.35px;line-height:22.35px;letter-spacing:-0.28px">2.ПРЕДПРИНИ...</div><div class="gc gr" style="left:336.9px;top:340.20px;width:106.8px;height:22.35px;line-height:22.35px">0,00</div><div class="gc gr" style="left:448.2px;top:340.20px;width:106.8px;height:22.35px;line-height:22.35px">0,00</div><div class="gc gr" style="left:559.5px;top:340.20px;width:106.8px;height:22.35px;line-height:22.35px">22 736,47</div><div class="gc gr" style="left:670.8px;top:340.20px;width:106.8px;height:22.35px;line-height:22.35px">0,00</div><div class="gc gr" style="left:782.1px;top:340.20px;width:106.8px;height:22.35px;line-height:22.35px">0,00</div><div class="gc gr" style="left:893.4px;top:340.20px;width:106.8px;height:22.35px;line-height:22.35px">0,00</div><div class="abs" style="left:0;top:362.75px;width:1006px;height:23.35px;background:#fdfdfe;border-bottom:1px solid #e6e6e6;border-top:1px solid #f1f1f1"></div><div class="gc" style="left:20.6px;top:363.55px;width:200px;height:22.35px;line-height:22.35px">Федотова Елена Владимировна</div><div class="gc" style="left:232.8px;top:363.55px;width:100px;height:22.35px;line-height:22.35px;letter-spacing:-0.28px">2.ПРЕДПРИНИ...</div><div class="gc gr" style="left:336.9px;top:363.55px;width:106.8px;height:22.35px;line-height:22.35px">0,00</div><div class="gc gr" style="left:448.2px;top:363.55px;width:106.8px;height:22.35px;line-height:22.35px">0,00</div><div class="gc gr" style="left:559.5px;top:363.55px;width:106.8px;height:22.35px;line-height:22.35px">3 410,47</div><div class="gc gr" style="left:670.8px;top:363.55px;width:106.8px;height:22.35px;line-height:22.35px">0,00</div><div class="gc gr" style="left:782.1px;top:363.55px;width:106.8px;height:22.35px;line-height:22.35px">0,00</div><div class="gc gr" style="left:893.4px;top:363.55px;width:106.8px;height:22.35px;line-height:22.35px">0,00</div><div class="abs" style="left:0;top:386.10px;width:1006px;height:23.35px;background:#f6f7f9;border-bottom:1px solid #e6e6e6;border-top:1px solid #f1f1f1"></div><div class="gc" style="left:20.6px;top:386.90px;width:200px;height:22.35px;line-height:22.35px">Шкутина Ольга Георгиевна</div><div class="gc" style="left:232.8px;top:386.90px;width:100px;height:22.35px;line-height:22.35px;letter-spacing:-0.28px">2.ПРЕДПРИНИ...</div><div class="gc gr" style="left:336.9px;top:386.90px;width:106.8px;height:22.35px;line-height:22.35px">0,00</div><div class="gc gr" style="left:448.2px;top:386.90px;width:106.8px;height:22.35px;line-height:22.35px">0,00</div><div class="gc gr" style="left:559.5px;top:386.90px;width:106.8px;height:22.35px;line-height:22.35px">703,73</div><div class="gc gr" style="left:670.8px;top:386.90px;width:106.8px;height:22.35px;line-height:22.35px">0,00</div><div class="gc gr" style="left:782.1px;top:386.90px;width:106.8px;height:22.35px;line-height:22.35px">0,00</div><div class="gc gr" style="left:893.4px;top:386.90px;width:106.8px;height:22.35px;line-height:22.35px">0,00</div><div class="abs" style="left:0;top:409.45px;width:1006px;height:23.35px;background:#fdfdfe;border-bottom:1px solid #e6e6e6;border-top:1px solid #f1f1f1"></div><div class="gc" style="left:20.6px;top:410.25px;width:200px;height:22.35px;line-height:22.35px">Шкутина Ольга Георгиевна</div><div class="gc" style="left:232.8px;top:410.25px;width:100px;height:22.35px;line-height:22.35px;letter-spacing:-0.28px">2.ПРЕДПРИНИ...</div><div class="gc gr" style="left:336.9px;top:410.25px;width:106.8px;height:22.35px;line-height:22.35px">0,00</div><div class="gc gr" style="left:448.2px;top:410.25px;width:106.8px;height:22.35px;line-height:22.35px">0,00</div><div class="gc gr" style="left:559.5px;top:410.25px;width:106.8px;height:22.35px;line-height:22.35px">105,56</div><div class="gc gr" style="left:670.8px;top:410.25px;width:106.8px;height:22.35px;line-height:22.35px">0,00</div><div class="gc gr" style="left:782.1px;top:410.25px;width:106.8px;height:22.35px;line-height:22.35px">0,00</div><div class="gc gr" style="left:893.4px;top:410.25px;width:106.8px;height:22.35px;line-height:22.35px">0,00</div><div class="abs" style="left:225.6px;top:0;width:1px;height:433px;background:#ececec"></div><div class="abs" style="left:336.9px;top:0;width:1px;height:433px;background:#ececec"></div><div class="abs" style="left:448.2px;top:0;width:1px;height:433px;background:#ececec"></div><div class="abs" style="left:559.5px;top:0;width:1px;height:433px;background:#ececec"></div><div class="abs" style="left:670.8px;top:0;width:1px;height:433px;background:#ececec"></div><div class="abs" style="left:782.1px;top:0;width:1px;height:433px;background:#ececec"></div><div class="abs" style="left:893.4px;top:0;width:1px;height:433px;background:#ececec"></div></div><div class="abs" style="left:53px;top:416px;width:1006px;height:23.35px;border-top:1px dotted #9a9a9a;border-bottom:1px dotted #9a9a9a"></div><div class="abs" style="left:53px;top:672.5px;width:1006px;height:22.5px;background:#f0f1f3"></div><div class="gc gr" style="left:389.9px;top:672.5px;width:108.3px;height:22px;line-height:22px;font-weight:bold;color:#222;font-size:13.8px">1 825,05</div><div class="gc gr" style="left:501.2px;top:672.5px;width:108.3px;height:22px;line-height:22px;font-weight:bold;color:#222;font-size:13.8px">0,00</div><div class="gc gr" style="left:612.5px;top:672.5px;width:108.3px;height:22px;line-height:22px;font-weight:bold;color:#222;font-size:13.8px">93 535,59</div><div class="gc gr" style="left:723.8px;top:672.5px;width:108.3px;height:22px;line-height:22px;font-weight:bold;color:#222;font-size:13.8px">0,00</div><div class="gc gr" style="left:835.1px;top:672.5px;width:108.3px;height:22px;line-height:22px;font-weight:bold;color:#222;font-size:13.8px">0,00</div><div class="gc gr" style="left:946.4px;top:672.5px;width:108.3px;height:22px;line-height:22px;font-weight:bold;color:#222;font-size:13.8px">0,00</div><div class="abs" style="left:1059px;top:240px;width:22px;height:455px;background:#fff"></div><svg class="abs" style="left:1066px;top:247px" width="13" height="9"><path d="M0 8 L6.5 1 L13 8 Z" fill="#8b8b8b"/></svg><div class="abs" style="left:1067px;top:457px;width:11px;height:192px;background:#8b8b8b;border-radius:6px"></div><svg class="abs" style="left:1066px;top:656px" width="13" height="9"><path d="M0 1 L6.5 8 L13 1 Z" fill="#8b8b8b"/></svg><div class="abs" style="left:1059px;top:672.5px;width:22px;height:22.5px;background:#fff"></div><div class="abs" style="left:1094px;top:88px;width:19px;height:669px;background:#fcfcfc"></div><svg class="abs" style="left:1096px;top:95px" width="15" height="10"><path d="M0 9 L7.5 1 L15 9 Z" fill="#8b8b8b"/></svg><div class="abs" style="left:1098px;top:134px;width:11px;height:581px;background:#8b8b8b;border-radius:6px"></div><svg class="abs" style="left:1096px;top:721px" width="15" height="10"><path d="M0 1 L7.5 9 L15 1 Z" fill="#8b8b8b"/></svg><div class="abs" style="left:21px;top:738px;width:1092px;height:19px;background:#fcfcfc"></div><svg class="abs" style="left:27px;top:740px" width="10" height="15"><path d="M9 0 L1 7.5 L9 15 Z" fill="#8b8b8b"/></svg><div class="abs" style="left:43px;top:742px;width:1010px;height:11px;background:#8b8b8b;border-radius:6px"></div><svg class="abs" style="left:1078px;top:740px" width="10" height="15"><path d="M1 0 L9 7.5 L1 15 Z" fill="#8b8b8b"/></svg><div class="abs" style="left:399px;top:411px;width:103px;height:35px;border:3px solid #db0b0b"></div><div class="abs nw" style="left:845px;top:776px;width:85px;height:25px;border:1px solid #b9c5cd;border-radius:3px;background:linear-gradient(#f4fbfe,#dbeaf5);text-align:center;line-height:22px;color:#222;font-size:12px;box-shadow:0 1px 0 #8fa9bb">Изменения</div><div class="abs nw" style="left:936px;top:776px;width:85px;height:25px;border:1px solid #b9c5cd;border-radius:3px;background:linear-gradient(#f4fbfe,#dbeaf5);text-align:center;line-height:22px;color:#222;font-size:12px;box-shadow:0 1px 0 #8fa9bb">Сохранить</div><div class="abs nw" style="left:1027px;top:776px;width:85px;height:25px;border:1px solid #b9c5cd;border-radius:3px;background:linear-gradient(#f4fbfe,#dbeaf5);text-align:center;line-height:22px;color:#222;font-size:12px;box-shadow:0 1px 0 #8fa9bb">Закрыть</div><div class="abs" style="left:0;top:842px;width:1897px;height:38px;background:#66a3c7;border-top:2px solid #1f6699"></div><div class="abs nw" style="left:0;top:848px;width:78px;height:32px;border-radius:4px 4px 0 0;background:linear-gradient(#c4dbe8 0,#b2d0e2 25%,#8fbdd8 42%,#6ba8c8 52%,#66a4c5 100%);border:1px solid #9cc2d8;color:#dfe5ea;font-weight:bold;font-size:20px;text-align:center;line-height:33px">Пуск</div><div class="abs" style="left:82px;top:849px;width:181px;height:31px;border-radius:3px 3px 0 0;background:linear-gradient(#d5dfe6,#c8d3db);border:1px solid #b3c4cf;border-bottom:none"></div><div class="abs" style="left:111px;top:856px;white-space:nowrap;height:20px;line-height:20px;color:#a7b0b6;font-size:12.4px">Расчеты по заработной ...</div><svg class="abs" style="left:87px;top:859px;opacity:.45" width="17" height="15" viewBox="0 0 17 15"><rect x="0.5" y="0.5" width="16" height="14" fill="#eef3fb" stroke="#97b3d6"/><rect x="1" y="1" width="15" height="3" fill="#a9c3e8"/><path d="M3 6.5h11M3 8.5h11M3 10.5h11M3 12.5h11" stroke="#9aa9bb" stroke-width="0.8"/></svg><div class="abs" style="left:268px;top:849px;width:181px;height:31px;border-radius:3px 3px 0 0;background:linear-gradient(#e6ebef,#d2dae0);border:1px solid #b3c4cf;border-bottom:none"></div><div class="abs" style="left:297px;top:856px;white-space:nowrap;height:20px;line-height:20px;color:#8f979d;font-size:12.4px">Реестр удержаний [With...</div><svg class="abs" style="left:273px;top:859px;opacity:1" width="17" height="15" viewBox="0 0 17 15"><rect x="0.5" y="0.5" width="16" height="14" fill="#eef3fb" stroke="#97b3d6"/><rect x="1" y="1" width="15" height="3" fill="#a9c3e8"/><path d="M3 6.5h11M3 8.5h11M3 10.5h11M3 12.5h11" stroke="#9aa9bb" stroke-width="0.8"/></svg><div class="abs" style="left:453px;top:849px;width:190px;height:31px;border-radius:3px 3px 0 0;background:linear-gradient(#e6ebef,#d2dae0);border:1px solid #b3c4cf;border-bottom:none"></div><div class="abs" style="left:482px;top:856px;white-space:nowrap;height:20px;line-height:20px;color:#8f979d;font-size:12.4px">Выплаты заработной пла...</div><svg class="abs" style="left:458px;top:859px;opacity:1" width="17" height="15" viewBox="0 0 17 15"><rect x="0.5" y="0.5" width="16" height="14" fill="#eef3fb" stroke="#97b3d6"/><rect x="1" y="1" width="15" height="3" fill="#a9c3e8"/><path d="M3 6.5h11M3 8.5h11M3 10.5h11M3 12.5h11" stroke="#9aa9bb" stroke-width="0.8"/></svg><div class="abs" style="left:646px;top:849px;width:186px;height:31px;border-radius:3px 3px 0 0;background:linear-gradient(#e6ebef,#d2dae0);border:1px solid #b3c4cf;border-bottom:none"></div><div class="abs" style="left:675px;top:856px;white-space:nowrap;height:20px;line-height:20px;color:#8f979d;font-size:12.4px">Реестр разовых начисле...</div><svg class="abs" style="left:651px;top:859px;opacity:1" width="17" height="15" viewBox="0 0 17 15"><rect x="0.5" y="0.5" width="16" height="14" fill="#eef3fb" stroke="#97b3d6"/><rect x="1" y="1" width="15" height="3" fill="#a9c3e8"/><path d="M3 6.5h11M3 8.5h11M3 10.5h11M3 12.5h11" stroke="#9aa9bb" stroke-width="0.8"/></svg><div class="abs" style="left:835px;top:849px;width:183px;height:31px;border-radius:3px 3px 0 0;background:linear-gradient(#e6ebef,#d2dae0);border:1px solid #b3c4cf;border-bottom:none"></div><div class="abs" style="left:864px;top:856px;white-space:nowrap;height:20px;line-height:20px;color:#8f979d;font-size:12.4px">Реестр налоговых карто...</div><svg class="abs" style="left:840px;top:859px;opacity:1" width="17" height="15" viewBox="0 0 17 15"><rect x="0.5" y="0.5" width="16" height="14" fill="#eef3fb" stroke="#97b3d6"/><rect x="1" y="1" width="15" height="3" fill="#a9c3e8"/><path d="M3 6.5h11M3 8.5h11M3 10.5h11M3 12.5h11" stroke="#9aa9bb" stroke-width="0.8"/></svg><div class="abs" style="left:1022px;top:849px;width:188px;height:31px;border-radius:3px 3px 0 0;background:linear-gradient(#e6ebef,#d2dae0);border:1px solid #b3c4cf;border-bottom:none"></div><div class="abs" style="left:1028px;top:856px;white-space:nowrap;height:20px;line-height:20px;color:#8f979d;font-size:12.4px">Расчетный листок Сырцева Т...</div><svg class="abs" style="left:1875px;top:857px" width="22" height="14"><path d="M0 0 L22 0 L11 12 Z" fill="#f4f7f9"/></svg><div class="abs" style="left:1387px;top:460px;width:474px;height:420px;background:#202020;border:1px solid #3b3d3f;border-bottom:none;box-shadow:0 0 9px rgba(0,0,0,.22)"></div><svg class="abs" style="left:1413px;top:472px" width="14" height="18" viewBox="0 0 14 18">
<rect x="0" y="0" width="14" height="18" rx="1" fill="#c9d3dc"/>
<rect x="1" y="1" width="12" height="4" fill="#46b6ee"/>
<g fill="#e7edf2"><rect x="1.5" y="6.5" width="3" height="2.5"/><rect x="5.5" y="6.5" width="3" height="2.5"/><rect x="9.5" y="6.5" width="3" height="2.5"/>
<rect x="1.5" y="10" width="3" height="2.5"/><rect x="5.5" y="10" width="3" height="2.5"/>
<rect x="1.5" y="13.5" width="3" height="2.5"/><rect x="5.5" y="13.5" width="3" height="2.5"/></g>
<rect x="9.5" y="10" width="3" height="6" fill="#1d5fb0"/>
</svg><div class="abs nw calc" style="left:1448px;top:472px;color:#fff;font-size:14.5px;line-height:18px">Калькулятор</div><svg class="abs" style="left:1705px;top:470px" width="140" height="24"><path d="M6 10.5 H18" stroke="#fff" stroke-width="1"/><rect x="63.5" y="5.5" width="11" height="11" fill="none" stroke="#fff" stroke-width="1"/><path d="M120 5 L132 17 M132 5 L120 17" stroke="#fff" stroke-width="1"/></svg><svg class="abs" style="left:1407px;top:523px" width="22" height="18"><path d="M2 3 H20 M2 9 H20 M2 15 H20" stroke="#fff" stroke-width="1.3"/></svg><div class="abs nw calc" style="left:1446px;top:515px;color:#fff;font-size:24px;font-weight:bold;line-height:32px">Обычный</div><svg class="abs" style="left:1586px;top:520px" width="22" height="22" viewBox="0 0 22 22"><path d="M2.5 11 V3.5 H11.5 M11.5 3 H19.5 V11 H11.5 Z M19.5 11 V19.5 H11.5" fill="none" stroke="#fff" stroke-width="1.2"/><path d="M3 19.5 L9 13.5 M4.5 13.5 H9 V18" fill="none" stroke="#fff" stroke-width="1.2"/></svg><svg class="abs" style="left:1818px;top:517px" width="24" height="24" viewBox="0 0 24 24"><path d="M4.5 9 A9 9 0 1 1 3.2 13" fill="none" stroke="#fff" stroke-width="1.4"/><path d="M2.5 5 L4.5 9.5 L9 8" fill="none" stroke="#fff" stroke-width="1.4"/><path d="M12 7 V12.5 H16" fill="none" stroke="#fff" stroke-width="1.4"/></svg><div class="abs nw calc" style="left:1600px;top:571px;width:237px;text-align:right;color:#a3a3a3;font-size:16.3px;line-height:22px">1303,61 + 521,44 =</div><div class="abs nw calc" style="left:1500px;top:600px;width:341px;text-align:right;color:#fff;font-size:57px;letter-spacing:-1.2px;-webkit-text-stroke:1.7px #fff;line-height:70px">1 825,05</div><div class="abs nw calc" style="left:1400px;top:707px;width:60px;text-align:center;color:#7b7b7b;font-size:15.5px;line-height:20px">MC</div><div class="abs nw calc" style="left:1477px;top:707px;width:60px;text-align:center;color:#7b7b7b;font-size:15.5px;line-height:20px">MR</div><div class="abs nw calc" style="left:1555px;top:707px;width:60px;text-align:center;color:#fff;font-size:15.5px;line-height:20px">M+</div><div class="abs nw calc" style="left:1632px;top:707px;width:60px;text-align:center;color:#fff;font-size:15.5px;line-height:20px">M−</div><div class="abs nw calc" style="left:1709px;top:707px;width:60px;text-align:center;color:#fff;font-size:15.5px;line-height:20px">MS</div><div class="abs nw calc" style="left:1806px;top:707px;color:#7b7b7b;font-size:15.5px;line-height:20px">M</div><svg class="abs" style="left:1820px;top:714px" width="9" height="6"><path d="M1 1 L4.5 4.5 L8 1" fill="none" stroke="#7b7b7b" stroke-width="1.2"/></svg><div class="abs" style="left:1393.5px;top:742.0px;width:113.5px;height:71px;background:#323232;border-radius:5px"></div><div class="abs" style="left:1509.7px;top:742.0px;width:113.5px;height:71px;background:#323232;border-radius:5px"></div><div class="abs" style="left:1625.9px;top:742.0px;width:113.5px;height:71px;background:#323232;border-radius:5px"></div><div class="abs" style="left:1742.1px;top:742.0px;width:113.5px;height:71px;background:#323232;border-radius:5px"></div><div class="abs" style="left:1393.5px;top:815.0px;width:113.5px;height:71px;background:#323232;border-radius:5px"></div><div class="abs" style="left:1509.7px;top:815.0px;width:113.5px;height:71px;background:#323232;border-radius:5px"></div><div class="abs" style="left:1625.9px;top:815.0px;width:113.5px;height:71px;background:#323232;border-radius:5px"></div><div class="abs" style="left:1742.1px;top:815.0px;width:113.5px;height:71px;background:#323232;border-radius:5px"></div><div class="abs nw calc" style="left:1393.5px;top:742.0px;width:113.5px;height:71px;line-height:71px;text-align:center;color:#fff;font-size:19px;">%</div><div class="abs nw calc" style="left:1509.7px;top:742.0px;width:113.5px;height:71px;line-height:71px;text-align:center;color:#fff;font-size:17.5px;">CE</div><div class="abs nw calc" style="left:1625.9px;top:742.0px;width:113.5px;height:71px;line-height:71px;text-align:center;color:#fff;font-size:17.5px;">C</div><svg class="abs" style="left:1790px;top:771px" width="19" height="15" viewBox="0 0 19 15"><path d="M6 1 H17.2 Q18 1 18 1.8 V13.2 Q18 14 17.2 14 H6 L1 7.5 Z" fill="none" stroke="#fff" stroke-width="1.3"/><path d="M8.5 4.5 L13.5 10.5 M13.5 4.5 L8.5 10.5" stroke="#fff" stroke-width="1.3"/></svg><div class="abs nw calc" style="left:1393.5px;top:815.0px;width:113.5px;height:71px;line-height:71px;text-align:center;color:#fff;font-size:18px;"><span style="font-size:11px;position:relative;top:-6px">1</span><span style="font-size:17px;position:relative;top:-1px;margin-left:-1px">/</span><span style="font-family:'Liberation Serif',serif;font-style:italic;font-size:22px;margin-left:-2px">x</span></div><div class="abs nw calc" style="left:1509.7px;top:815.0px;width:113.5px;height:71px;line-height:71px;text-align:center;color:#fff;font-size:18px;"><span style="font-family:'Liberation Serif',serif;font-style:italic;font-size:23px">x</span><span style="font-size:13px;position:relative;top:-8px;left:2px">2</span></div><div class="abs nw calc" style="left:1625.9px;top:815.0px;width:113.5px;height:71px;line-height:71px;text-align:center;color:#fff;font-size:18px;"><span style="font-size:11px;position:relative;top:-8px">2</span><span style="font-size:19px">√</span><span style="font-family:'Liberation Serif',serif;font-style:italic;font-size:22px">x</span></div><svg class="abs" style="left:1790px;top:843px" width="18" height="15"><path d="M0 7.5 H17.5" stroke="#fff" stroke-width="1.3"/><circle cx="8.8" cy="2.2" r="1.2" fill="#fff"/><circle cx="8.8" cy="12.8" r="1.2" fill="#fff"/></svg></body></html>
